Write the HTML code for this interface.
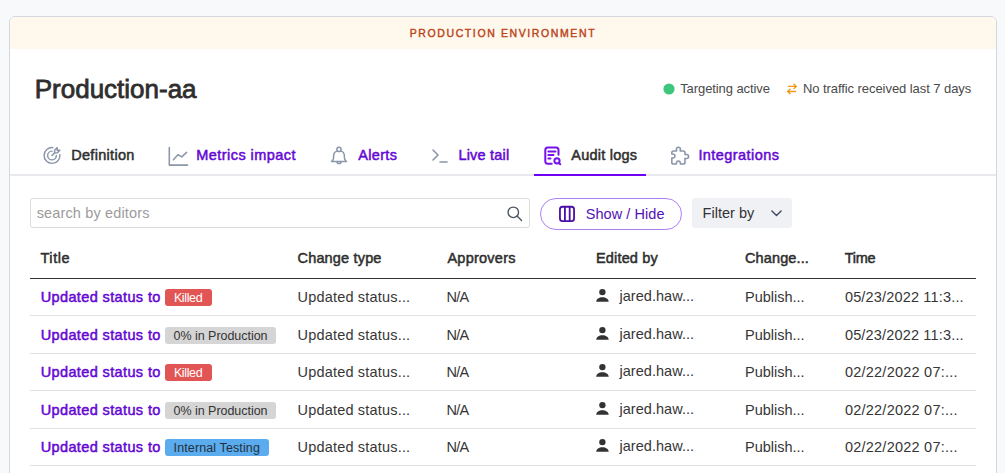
<!DOCTYPE html>
<html><head><meta charset="utf-8"><title>Audit logs</title>
<style>
html,body{margin:0;padding:0;}
body{width:1005px;height:473px;overflow:hidden;background:#f8f9fb;position:relative;font-family:"Liberation Sans",sans-serif;}
.card{position:absolute;left:9px;top:16px;width:986px;height:520px;border:1px solid #d3d8e0;border-radius:6px;background:#fff;overflow:hidden;}
.banner{position:absolute;left:0;top:0;width:100%;height:32px;background:#fff8ec;}
.tabline{position:absolute;left:10px;top:174px;width:986px;height:2px;background:#e7e9ed;}
.active{position:absolute;left:534px;top:174px;width:112px;height:2px;background:#7000f5;}
.search{position:absolute;left:30px;top:198px;width:498px;height:28px;border:1px solid #dcdcdc;border-radius:3px;background:#fff;}
.showhide{position:absolute;left:540px;top:198px;width:140px;height:30px;border:1px solid #ab82f3;border-radius:16px;background:#fff;}
.filter{position:absolute;left:692px;top:198px;width:100px;height:30px;border-radius:3px;background:#f0f1f5;}
.hl{position:absolute;left:30px;top:278px;width:946px;height:1px;background:#333;}
.rl{position:absolute;left:30px;width:946px;height:1px;background:#e3e3e3;}
.t{position:absolute;white-space:nowrap;font-variant-ligatures:none;}
.ic{position:absolute;}
.ov{position:absolute;left:0;top:0;}
.dot{position:absolute;width:11px;height:11px;border-radius:50%;background:#3ec97c;}
.badge{position:absolute;left:165px;height:17px;border-radius:3px;font-size:12.5px;line-height:17px;white-space:nowrap;}
.badge.red{width:47px;background:#e25555;color:#fff;}
.badge.gray{width:111px;background:#d5d5d5;color:#333;}
.badge.blue{width:104px;background:#5aacee;color:#2a3442;}
</style></head><body>
<div class="card"><div class="banner"></div></div>
<div class="tabline"></div><div class="active"></div>
<div class="search"></div><div class="showhide"></div><div class="filter"></div>
<div class="hl"></div>
<div class="badge red" style="top:289px"></div>
<div class="rl" style="top:315px"></div>
<div class="badge gray" style="top:327px"></div>
<div class="rl" style="top:353px"></div>
<div class="badge red" style="top:364px"></div>
<div class="rl" style="top:390px"></div>
<div class="badge gray" style="top:402px"></div>
<div class="rl" style="top:428px"></div>
<div class="badge blue" style="top:439px"></div>
<div class="rl" style="top:465px"></div>
<div class="t" style="left:409.70px;top:26.50px;font-size:10.5px;line-height:13px;font-weight:400;color:#bb431a;letter-spacing:1.610px;-webkit-text-stroke:0.4px #bb431a">PRODUCTION ENVIRONMENT</div>
<div class="t" style="left:34.75px;top:73.00px;font-size:26px;line-height:32px;font-weight:400;color:#2e2e2e;letter-spacing:-0.004px;-webkit-text-stroke:0.8px #2e2e2e">Production-aa</div>
<div class="t" style="left:680.20px;top:80.50px;font-size:13px;line-height:16px;font-weight:400;color:#4a4a4a;letter-spacing:-0.087px">Targeting active</div>
<div class="t" style="left:802.90px;top:80.50px;font-size:13px;line-height:16px;font-weight:400;color:#4a4a4a;letter-spacing:-0.063px">No traffic received last 7 days</div>
<div class="t" style="left:71.20px;top:146.00px;font-size:14.5px;line-height:18px;font-weight:400;color:#2e2e2e;letter-spacing:0.300px;-webkit-text-stroke:0.5px #2e2e2e">Definition</div>
<div class="t" style="left:196.30px;top:146.00px;font-size:14.5px;line-height:18px;font-weight:400;color:#6507d4;letter-spacing:0.438px;-webkit-text-stroke:0.5px #6507d4">Metrics impact</div>
<div class="t" style="left:358.20px;top:146.00px;font-size:14.5px;line-height:18px;font-weight:400;color:#6507d4;letter-spacing:0.340px;-webkit-text-stroke:0.5px #6507d4">Alerts</div>
<div class="t" style="left:458.40px;top:146.00px;font-size:14.5px;line-height:18px;font-weight:400;color:#6507d4;letter-spacing:0.200px;-webkit-text-stroke:0.5px #6507d4">Live tail</div>
<div class="t" style="left:571.30px;top:146.00px;font-size:14.5px;line-height:18px;font-weight:400;color:#2e2e2e;letter-spacing:0.222px;-webkit-text-stroke:0.5px #2e2e2e">Audit logs</div>
<div class="t" style="left:698.40px;top:146.00px;font-size:14.5px;line-height:18px;font-weight:400;color:#6507d4;letter-spacing:0.436px;-webkit-text-stroke:0.5px #6507d4">Integrations</div>
<div class="t" style="left:36.70px;top:204.00px;font-size:14.5px;line-height:18px;font-weight:400;color:#9b9b9b;letter-spacing:0.144px">search by editors</div>
<div class="t" style="left:585.70px;top:205.00px;font-size:14.5px;line-height:18px;font-weight:400;color:#5312b6;letter-spacing:0.060px">Show / Hide</div>
<div class="t" style="left:702.60px;top:204.00px;font-size:14.5px;line-height:18px;font-weight:400;color:#333;letter-spacing:0.025px">Filter by</div>
<div class="t" style="left:40.40px;top:249.00px;font-size:14.5px;line-height:18px;font-weight:400;color:#2e2e2e;letter-spacing:0.600px;-webkit-text-stroke:0.5px #2e2e2e">Title</div>
<div class="t" style="left:297.50px;top:249.00px;font-size:14.5px;line-height:18px;font-weight:400;color:#2e2e2e;letter-spacing:0.170px;-webkit-text-stroke:0.5px #2e2e2e">Change type</div>
<div class="t" style="left:447.40px;top:249.00px;font-size:14.5px;line-height:18px;font-weight:400;color:#2e2e2e;letter-spacing:0.250px;-webkit-text-stroke:0.5px #2e2e2e">Approvers</div>
<div class="t" style="left:596.00px;top:249.00px;font-size:14.5px;line-height:18px;font-weight:400;color:#2e2e2e;letter-spacing:0.162px;-webkit-text-stroke:0.5px #2e2e2e">Edited by</div>
<div class="t" style="left:745.00px;top:249.00px;font-size:14.5px;line-height:18px;font-weight:400;color:#2e2e2e;letter-spacing:0.125px;-webkit-text-stroke:0.5px #2e2e2e">Change...</div>
<div class="t" style="left:844.70px;top:249.00px;font-size:14.5px;line-height:18px;font-weight:400;color:#2e2e2e;letter-spacing:-0.233px;-webkit-text-stroke:0.5px #2e2e2e">Time</div>
<div class="t" style="left:40.70px;top:288.00px;font-size:14.5px;line-height:18px;font-weight:400;color:#6507d4;letter-spacing:0.375px;-webkit-text-stroke:0.5px #6507d4">Updated status to</div>
<div class="t" style="left:297.50px;top:288.00px;font-size:14.5px;line-height:18px;font-weight:400;color:#363636;letter-spacing:0.188px">Updated status...</div>
<div class="t" style="left:446.40px;top:288.00px;font-size:14.5px;line-height:18px;font-weight:400;color:#363636;letter-spacing:-0.700px">N/A</div>
<div class="t" style="left:619.50px;top:287.00px;font-size:14.5px;line-height:18px;font-weight:400;color:#363636;letter-spacing:0.036px">jared.haw...</div>
<div class="t" style="left:745.00px;top:288.00px;font-size:14.5px;line-height:18px;font-weight:400;color:#363636;letter-spacing:-0.011px">Publish...</div>
<div class="t" style="left:844.90px;top:288.00px;font-size:14.5px;line-height:18px;font-weight:400;color:#363636;letter-spacing:0.171px">05/23/2022 11:3...</div>
<div class="t" style="left:173.90px;top:290.00px;font-size:12.5px;line-height:16px;font-weight:400;color:#ffffff;letter-spacing:-0.360px">Killed</div>
<div class="t" style="left:40.70px;top:326.00px;font-size:14.5px;line-height:18px;font-weight:400;color:#6507d4;letter-spacing:0.375px;-webkit-text-stroke:0.5px #6507d4">Updated status to</div>
<div class="t" style="left:297.50px;top:326.00px;font-size:14.5px;line-height:18px;font-weight:400;color:#363636;letter-spacing:0.188px">Updated status...</div>
<div class="t" style="left:446.40px;top:326.00px;font-size:14.5px;line-height:18px;font-weight:400;color:#363636;letter-spacing:-0.700px">N/A</div>
<div class="t" style="left:619.50px;top:325.00px;font-size:14.5px;line-height:18px;font-weight:400;color:#363636;letter-spacing:0.036px">jared.haw...</div>
<div class="t" style="left:745.00px;top:326.00px;font-size:14.5px;line-height:18px;font-weight:400;color:#363636;letter-spacing:-0.011px">Publish...</div>
<div class="t" style="left:844.90px;top:326.00px;font-size:14.5px;line-height:18px;font-weight:400;color:#363636;letter-spacing:0.171px">05/23/2022 11:3...</div>
<div class="t" style="left:173.60px;top:328.00px;font-size:12.5px;line-height:16px;font-weight:400;color:#333333;letter-spacing:-0.040px">0% in Production</div>
<div class="t" style="left:40.70px;top:363.00px;font-size:14.5px;line-height:18px;font-weight:400;color:#6507d4;letter-spacing:0.375px;-webkit-text-stroke:0.5px #6507d4">Updated status to</div>
<div class="t" style="left:297.50px;top:363.00px;font-size:14.5px;line-height:18px;font-weight:400;color:#363636;letter-spacing:0.188px">Updated status...</div>
<div class="t" style="left:446.40px;top:363.00px;font-size:14.5px;line-height:18px;font-weight:400;color:#363636;letter-spacing:-0.700px">N/A</div>
<div class="t" style="left:619.50px;top:362.00px;font-size:14.5px;line-height:18px;font-weight:400;color:#363636;letter-spacing:0.036px">jared.haw...</div>
<div class="t" style="left:745.00px;top:363.00px;font-size:14.5px;line-height:18px;font-weight:400;color:#363636;letter-spacing:-0.011px">Publish...</div>
<div class="t" style="left:844.90px;top:363.00px;font-size:14.5px;line-height:18px;font-weight:400;color:#363636;letter-spacing:0.238px">02/22/2022 07:...</div>
<div class="t" style="left:173.90px;top:365.00px;font-size:12.5px;line-height:16px;font-weight:400;color:#ffffff;letter-spacing:-0.360px">Killed</div>
<div class="t" style="left:40.70px;top:401.00px;font-size:14.5px;line-height:18px;font-weight:400;color:#6507d4;letter-spacing:0.375px;-webkit-text-stroke:0.5px #6507d4">Updated status to</div>
<div class="t" style="left:297.50px;top:401.00px;font-size:14.5px;line-height:18px;font-weight:400;color:#363636;letter-spacing:0.188px">Updated status...</div>
<div class="t" style="left:446.40px;top:401.00px;font-size:14.5px;line-height:18px;font-weight:400;color:#363636;letter-spacing:-0.700px">N/A</div>
<div class="t" style="left:619.50px;top:400.00px;font-size:14.5px;line-height:18px;font-weight:400;color:#363636;letter-spacing:0.036px">jared.haw...</div>
<div class="t" style="left:745.00px;top:401.00px;font-size:14.5px;line-height:18px;font-weight:400;color:#363636;letter-spacing:-0.011px">Publish...</div>
<div class="t" style="left:844.90px;top:401.00px;font-size:14.5px;line-height:18px;font-weight:400;color:#363636;letter-spacing:0.238px">02/22/2022 07:...</div>
<div class="t" style="left:173.60px;top:403.00px;font-size:12.5px;line-height:16px;font-weight:400;color:#333333;letter-spacing:-0.040px">0% in Production</div>
<div class="t" style="left:40.70px;top:438.00px;font-size:14.5px;line-height:18px;font-weight:400;color:#6507d4;letter-spacing:0.375px;-webkit-text-stroke:0.5px #6507d4">Updated status to</div>
<div class="t" style="left:297.50px;top:438.00px;font-size:14.5px;line-height:18px;font-weight:400;color:#363636;letter-spacing:0.188px">Updated status...</div>
<div class="t" style="left:446.40px;top:438.00px;font-size:14.5px;line-height:18px;font-weight:400;color:#363636;letter-spacing:-0.700px">N/A</div>
<div class="t" style="left:619.50px;top:437.00px;font-size:14.5px;line-height:18px;font-weight:400;color:#363636;letter-spacing:0.036px">jared.haw...</div>
<div class="t" style="left:745.00px;top:438.00px;font-size:14.5px;line-height:18px;font-weight:400;color:#363636;letter-spacing:-0.011px">Publish...</div>
<div class="t" style="left:844.90px;top:438.00px;font-size:14.5px;line-height:18px;font-weight:400;color:#363636;letter-spacing:0.238px">02/22/2022 07:...</div>
<div class="t" style="left:173.60px;top:440.00px;font-size:12.5px;line-height:16px;font-weight:400;color:#26303c;letter-spacing:0.113px">Internal Testing</div>
<svg class="ov" width="1005" height="473" viewBox="0 0 1005 473"><circle cx="669" cy="89" r="5.6" fill="#3ec77c"/><g fill="none" stroke="#f39a1e" stroke-width="1.4" stroke-linecap="round" stroke-linejoin="round"><path d="M788.4 86.4H796.4M794 84.2L796.4 86.4 794 88.6M795.6 91.5H787.6M790 89.3L787.6 91.5 790 93.7"/></g><g transform="translate(41.5,145) scale(0.875)" fill="none" stroke="#8b96aa" stroke-width="1.7" stroke-linecap="round" stroke-linejoin="round"><path d="M12 7a5 5 0 1 0 5 5"/><path d="M13 3.055a9 9 0 1 0 7.941 7.945"/><path d="M15 6v3h3l3 -3h-3v-3z"/><path d="M15 9l-3 3"/></g><g transform="translate(166,144)" fill="none" stroke="#8b96aa" stroke-width="1.55" stroke-linecap="round" stroke-linejoin="round"><path d="M3.3 3.5V21.1H21.6"/><path d="M7.4 15.7L11.9 10.7 15.7 12.9 20.6 8.4"/></g><g transform="translate(327,144)" fill="none" stroke="#8b96aa" stroke-width="1.5" stroke-linecap="round" stroke-linejoin="round"><circle cx="12" cy="5.4" r="2.1"/><path d="M10 7.1C7.6 7.8 6.6 9.8 6.6 12.2V14C6.6 15.6 5.6 16.6 4.5 17.5H19.5C18.4 16.6 17.4 15.6 17.4 14V12.2C17.4 9.8 16.4 7.8 14 7.1"/><path d="M10 17.8a2 1.8 0 0 0 4 0"/></g><g transform="translate(428,143)" fill="none" stroke="#8b96aa" stroke-width="1.6" stroke-linecap="round" stroke-linejoin="round"><path d="M5 7l5 5l-5 5"/><path d="M12 19h7"/></g><g transform="translate(540,144)" fill="none" stroke="#7512ea" stroke-width="2" stroke-linecap="round" stroke-linejoin="round"><path d="M18.5 10.7V6.1A2.5 2.5 0 0 0 16 3.6H7.8A2.5 2.5 0 0 0 5.3 6.1V17.3A2.5 2.5 0 0 0 7.8 19.8H11.7"/><path d="M8.4 7.6H15.5M8.4 10.9H13.5M8.4 14.5H10.5"/><circle cx="17" cy="16.8" r="2.6"/><path d="M19 18.8L20.3 20.3"/></g><g transform="translate(668,144)" fill="none" stroke="#8b96aa" stroke-width="1.6" stroke-linecap="round" stroke-linejoin="round"><path d="M5.6 7H8.6C8.6 6.3 8.4 5.9 8.4 5.2A2 2 0 0 1 12.4 5.2C12.4 5.9 12.2 6.3 12.2 7H15.2A1.8 1.8 0 0 1 17 8.8V10.6C17.6 10.6 18.1 10.5 18.6 10.5A2 2 0 0 1 18.6 14.5C18.1 14.5 17.6 14.4 17 14.4V18.2A1.8 1.8 0 0 1 15.2 20H12.5C12.5 19.3 12.5 17 10.4 17C8.3 17 8.3 19.3 8.3 20H5.6A1.8 1.8 0 0 1 3.8 18.2V14C4.6 14 7 14.1 7 12C7 9.9 4.6 10 3.8 10V8.8A1.8 1.8 0 0 1 5.6 7Z"/></g><g transform="translate(505.8,204.8) scale(0.75)" fill="none" stroke="#485262" stroke-width="1.8" stroke-linecap="round" stroke-linejoin="round"><circle cx="10" cy="10" r="7"/><path d="M21 21l-6 -6"/></g><g fill="none" stroke="#4a0fa6" stroke-width="1.8" stroke-linecap="round" stroke-linejoin="round"><rect x="559.95" y="206.75" width="14.1" height="14.3" rx="2.6"/><path d="M564.9 207V220.8M569.7 207V220.8"/></g><path d="M771.9 210.9L776.5 215.4 781.1 210.9" fill="none" stroke="#3d4a5c" stroke-width="1.4" stroke-linecap="round" stroke-linejoin="round"/><g transform="translate(0,0)" fill="#333"><circle cx="602.4" cy="292.1" r="3.2"/><path d="M596.2 301.7C596.4 298.8 599 297.2 602.4 297.2S608.4 298.8 608.7 301.7Z"/></g><g transform="translate(0,38)" fill="#333"><circle cx="602.4" cy="292.1" r="3.2"/><path d="M596.2 301.7C596.4 298.8 599 297.2 602.4 297.2S608.4 298.8 608.7 301.7Z"/></g><g transform="translate(0,75)" fill="#333"><circle cx="602.4" cy="292.1" r="3.2"/><path d="M596.2 301.7C596.4 298.8 599 297.2 602.4 297.2S608.4 298.8 608.7 301.7Z"/></g><g transform="translate(0,113)" fill="#333"><circle cx="602.4" cy="292.1" r="3.2"/><path d="M596.2 301.7C596.4 298.8 599 297.2 602.4 297.2S608.4 298.8 608.7 301.7Z"/></g><g transform="translate(0,150)" fill="#333"><circle cx="602.4" cy="292.1" r="3.2"/><path d="M596.2 301.7C596.4 298.8 599 297.2 602.4 297.2S608.4 298.8 608.7 301.7Z"/></g></svg>
</body></html>
